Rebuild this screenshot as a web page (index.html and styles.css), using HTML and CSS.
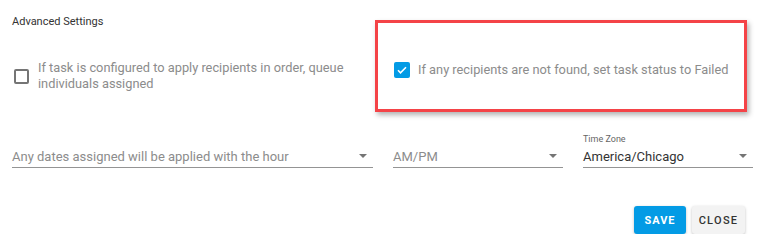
FILE: index.html
```html
<!DOCTYPE html>
<html lang="en">
<head>
  <meta charset="UTF-8">
  <meta name="viewport" content="width=device-width, initial-scale=1.0">
  <title>Advanced Settings</title>
  <link rel="stylesheet" href="styles.css">
</head>
<body>

<div class="panel">
  <div class="top-row">
    <div class="left-col">
      <h3 class="section-title">Advanced Settings</h3>
      <label class="option">
        <span class="checkbox"></span>
        <span class="option-text">If task is configured to apply recipients in order, queue individuals assigned</span>
      </label>
    </div>

    <div class="highlight">
      <label class="option">
        <span class="checkbox checked">
          <svg width="12" height="12" viewBox="0 0 24 24"><path d="M4 12.5l5 5L20 6.5" fill="none" stroke="#fff" stroke-width="3.2"/></svg>
        </span>
        <span class="option-text">If any recipients are not found, set task status to Failed</span>
      </label>
    </div>
  </div>

  <div class="fields">
    <div class="field field-wide">
      <div class="field-label"></div>
      <div class="select">
        <span class="placeholder">Any dates assigned will be applied with the hour</span>
        <span class="arrow"></span>
      </div>
    </div>
    <div class="field">
      <div class="field-label"></div>
      <div class="select">
        <span class="placeholder">AM/PM</span>
        <span class="arrow"></span>
      </div>
    </div>
    <div class="field">
      <div class="field-label">Time Zone</div>
      <div class="select">
        <span class="value">America/Chicago</span>
        <span class="arrow"></span>
      </div>
    </div>
  </div>

  <div class="actions">
    <button class="btn btn-save">Save</button>
    <button class="btn btn-close">Close</button>
  </div>
</div>

</body>
</html>
```

FILE: styles.css
```css
/* Dialog body */
body {
  font-family: Roboto, "Noto Sans", Arial, sans-serif;
  background-color: #fff;
  margin: 0;
  padding: 0;
}

.panel {
  padding: 0 8px 0 12px;
}

/* Checkbox row */
.top-row {
  display: flex;
}

.left-col {
  width: 363px;
  padding-top: 15px;
}

.section-title {
  margin: 0;
  font-size: 11px;
  line-height: 14px;
  font-weight: 400;
  color: #333;
}

.left-col .option {
  margin-top: 31px;
  padding-left: 2px;
}

.option {
  display: flex;
  align-items: center;
  gap: 9px;
  font-size: 12.8px;
  line-height: 16px;
  color: #8c8c8c;
}

.checkbox {
  flex: none;
  width: 15px;
  height: 15px;
  box-sizing: border-box;
  border: 2px solid #757575;
  border-radius: 2px;
  display: flex;
  align-items: center;
  justify-content: center;
}

.checkbox.checked {
  width: 16px;
  height: 16px;
  border: none;
  background-color: #039be5;
}

.option-text {
  width: 312px;
}

.highlight .option-text {
  width: auto;
}

/* Annotation box */
.highlight {
  margin-top: 20px;
  width: 372px;
  height: 92px;
  box-sizing: border-box;
  border: 3px solid #f44347;
  padding: 39px 0 0 16px;
  box-shadow: 2px 3px 5px rgba(0, 0, 0, 0.3);
}

.highlight .option {
  gap: 8px;
}

/* Selects */
.fields {
  display: flex;
  gap: 20px;
  margin-top: 21px;
}

.field {
  width: 170px;
}

.field-wide {
  width: 361px;
}

.field-label {
  height: 12px;
  font-size: 9px;
  line-height: 12px;
  color: #666;
}

.select {
  display: flex;
  justify-content: space-between;
  align-items: center;
  height: 22px;
  border-bottom: 1px solid #949494;
  font-size: 13px;
}

.placeholder {
  color: #8c8c8c;
}

.value {
  color: #333;
}

.arrow {
  width: 0;
  height: 0;
  margin-right: 6px;
  border-left: 4px solid transparent;
  border-right: 4px solid transparent;
  border-top: 4px solid #757575;
}

/* Buttons */
.actions {
  display: flex;
  justify-content: flex-end;
  gap: 6px;
  margin-top: 38px;
  padding-right: 8px;
}

.btn {
  height: 28px;
  border: none;
  border-radius: 3px;
  font-family: Roboto, Arial, sans-serif;
  font-size: 11px;
  font-weight: 700;
  letter-spacing: 1px;
  text-transform: uppercase;
  cursor: pointer;
  box-shadow: 0 1px 3px rgba(0, 0, 0, 0.25);
}

.btn-save {
  width: 52px;
  background-color: #039be5;
  color: #fff;
}

.btn-close {
  width: 53px;
  background-color: #f3f3f3;
  color: #333;
  font-weight: 500;
  letter-spacing: 1.3px;
}
```
